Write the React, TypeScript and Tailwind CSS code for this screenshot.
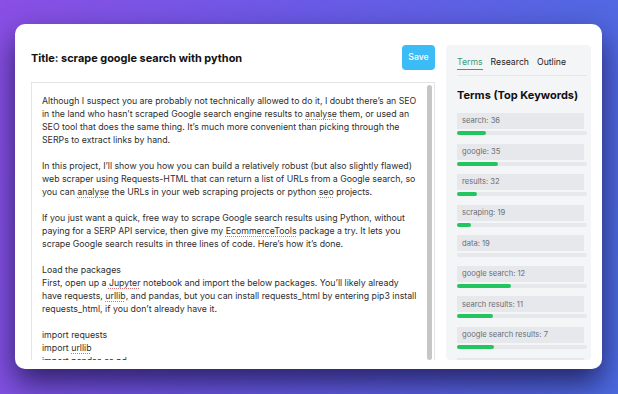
import React from "react";

const Typo = ({ children }: { children: React.ReactNode }) => (
  <span className="underline decoration-dotted decoration-[#e07070] underline-offset-2">{children}</span>
);

const lines: React.ReactNode[] = [
  "Although I suspect you are probably not technically allowed to do it, I doubt there\u2019s an SEO",
  <>in the land who hasn&rsquo;t scraped Google search engine results to <Typo>analyse</Typo> them, or used an</>,
  "SEO tool that does the same thing. It\u2019s much more convenient than picking through the",
  "SERPs to extract links by hand.",
  "",
  "In this project, I\u2019ll show you how you can build a relatively robust (but also slightly flawed)",
  "web scraper using Requests-HTML that can return a list of URLs from a Google search, so",
  <>you can <Typo>analyse</Typo> the URLs in your web scraping projects or python <Typo>seo</Typo> projects.</>,
  "",
  "If you just want a quick, free way to scrape Google search results using Python, without",
  <>paying for a SERP API service, then give my <Typo>EcommerceTools</Typo> package a try. It lets you</>,
  "scrape Google search results in three lines of code. Here\u2019s how it\u2019s done.",
  "",
  "Load the packages",
  <>First, open up a <Typo>Jupyter</Typo> notebook and import the below packages. You&rsquo;ll likely already</>,
  <>have requests, <Typo>urllib</Typo>, and pandas, but you can install requests_html by entering pip3 install</>,
  "requests_html, if you don\u2019t already have it.",
  "",
  "import requests",
  <>import <Typo>urllib</Typo></>,
  "import pandas as pd",
];

const terms = [
  { label: "search: 36", fill: 29 },
  { label: "google: 35", fill: 41 },
  { label: "results: 32", fill: 20 },
  { label: "scraping: 19", fill: 14 },
  { label: "data: 19", fill: 0 },
  { label: "google search: 12", fill: 54 },
  { label: "search results: 11", fill: 36 },
  { label: "google search results: 7", fill: 37 },
  { label: "search engine: 6", fill: 30 },
];

export default function App() {
  return (
    <div
      className="w-[618px] h-[394px] overflow-hidden bg-[linear-gradient(100deg,#8a4fe4_0%,#6a5ae6_45%,#4b6be0_100%)] pt-[24px] pl-[15px]"
      style={{ fontFamily: "Inter, 'Noto Sans', sans-serif" }}
    >
      <div className="w-[587px] h-[345px] bg-white rounded-[10px] shadow-[0_14px_30px_rgba(20,15,60,0.75)] pt-[21px] pl-[16px] pr-[11px] pb-[9px] flex gap-[11px]">
        <div className="w-[404px] flex flex-col min-h-0">
          <div className="flex items-center justify-between h-[25px]">
            <h1 className="text-[10.95px] font-bold text-[#111] pt-[1px]">
              Title: scrape google search with python
            </h1>
            <button className="h-[25px] w-[33px] rounded-[4px] bg-[#3bbcf6] text-white text-[8.7px] font-medium">
              Save
            </button>
          </div>
          <div className="relative mt-[12px] flex-1 min-h-0 overflow-hidden border-t border-l border-r border-[#e3e4e8] pl-[10px] pt-[11px]">
            <div className="text-[8.78px] leading-[13px] text-[#2e2e2e]">
              {lines.map((l, i) => (
                <div key={i} className="whitespace-nowrap h-[13px]">
                  {l}
                </div>
              ))}
            </div>
            <div className="absolute right-[2px] top-[2px] bottom-0 w-[5px] rounded-full bg-[#c6c6c6]" />
          </div>
        </div>
        <div className="w-[145px] bg-[#f4f5f7] rounded-[4px] pl-[11px] pr-[4px] overflow-hidden flex flex-col">
          <div className="flex gap-[8px] text-[8.7px] leading-[11px] text-[#222] h-[31px] shrink-0 pt-[12px] border-b border-[#e6e7ea]">
            <span className="text-[#3f9a78] border-b border-[#3f9a78] h-[13px]">Terms</span>
            <span>Research</span>
            <span>Outline</span>
          </div>
          <h2 className="mt-[12px] text-[11px] font-bold text-[#111] leading-[14px] shrink-0">Terms (Top Keywords)</h2>
          <div className="mt-[11px] flex flex-col gap-[8.57px]">
            {terms.map((t) => (
              <div key={t.label} className="flex flex-col gap-[2px] shrink-0">
                <div className="h-[16px] mr-[3px] bg-[#e7e8eb] text-[7.6px] text-[#6b6f76] pl-[5px] flex items-center">
                  {t.label}
                </div>
                <div className="h-[4px] rounded-full bg-[#e7e8eb]">
                  <div className="h-[4px] rounded-full bg-[#22c55e]" style={{ width: t.fill }} />
                </div>
              </div>
            ))}
          </div>
        </div>
      </div>
    </div>
  );
}
